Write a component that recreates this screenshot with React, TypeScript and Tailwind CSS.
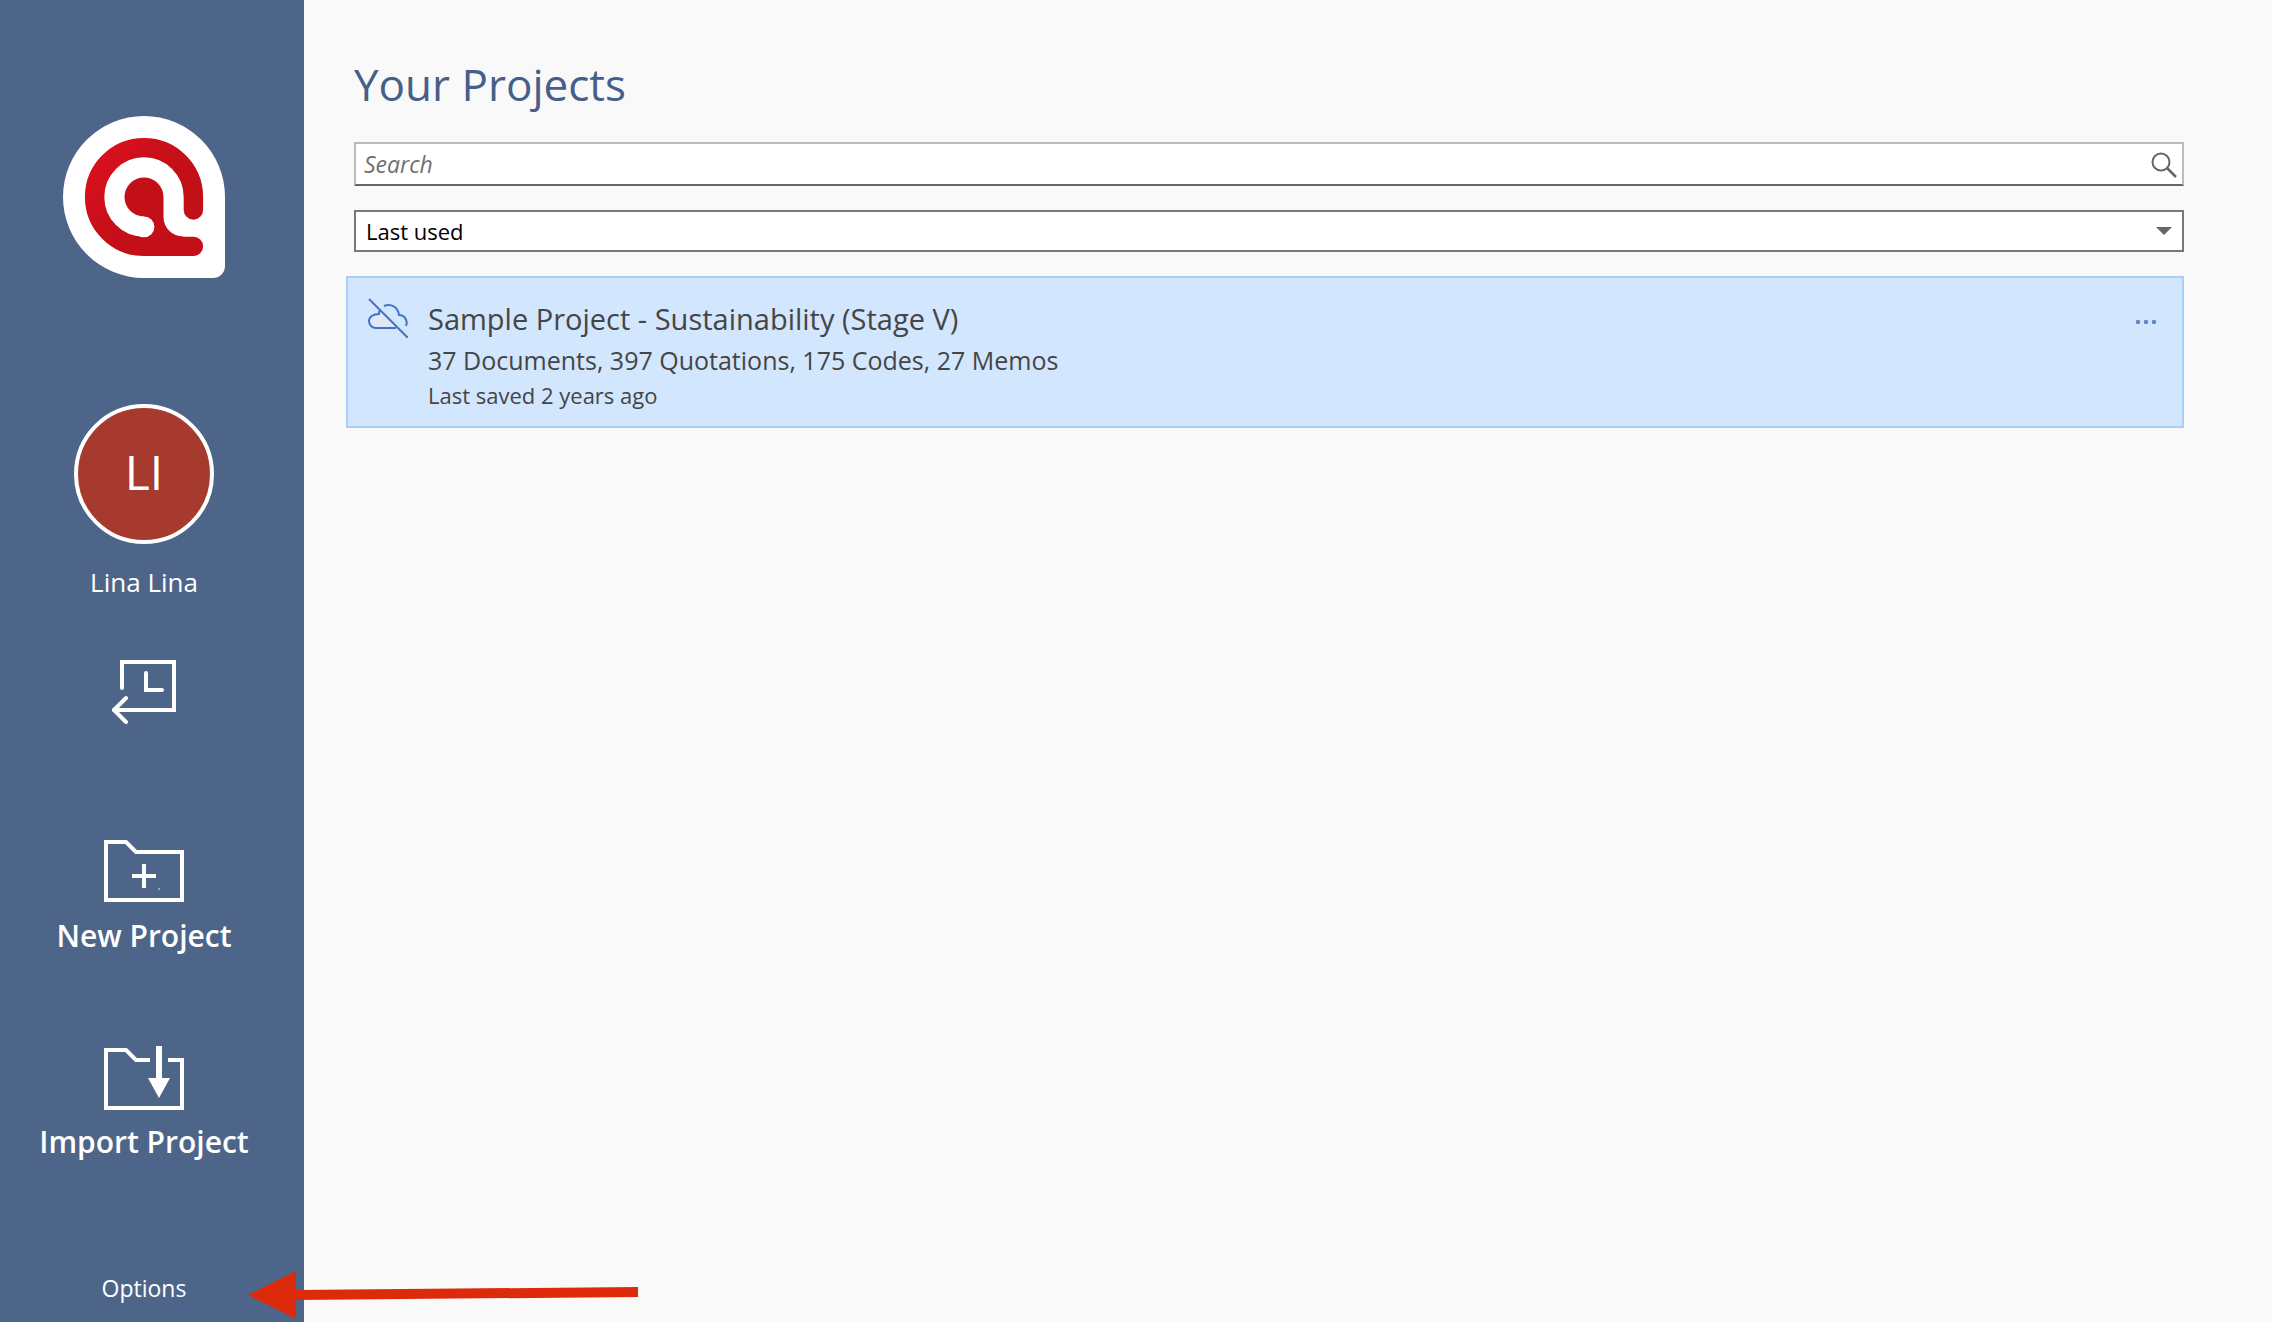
import { useState } from "react";
import type { ReactNode } from "react";

interface Project {
  name: string;
  stats: string;
  saved: string;
}

const projects: Project[] = [
  {
    name: "Sample Project - Sustainability (Stage V)",
    stats: "37 Documents, 397 Quotations, 175 Codes, 27 Memos",
    saved: "Last saved 2 years ago",
  },
];

const Logo = () => (
  <svg className="w-[162px] h-[162px]" viewBox="0 0 162 162" fill="none" aria-label="Logo">
    <defs>
      <linearGradient id="logo-red" gradientUnits="userSpaceOnUse" x1="30" y1="30" x2="100" y2="90">
        <stop offset="0" stopColor="#dd0f1e" />
        <stop offset="0.7" stopColor="#c61019" />
        <stop offset="1" stopColor="#c20f18" />
      </linearGradient>
    </defs>
    <path d="M81 0a81 81 0 0 1 81 81v69a12 12 0 0 1-12 12H81A81 81 0 0 1 81 0z" fill="#fff" />
    <path
      d="M130.4 94V81A49.4 49.4 0 1 0 81 130.4h49.4"
      stroke="url(#logo-red)"
      strokeWidth="19.4"
      strokeLinecap="round"
    />
    <path d="M81 61.5A19.5 19.5 0 0 1 100.5 81v20a19.5 19.5 0 0 0 19.5 19.5V126H81v-25.5a19.5 19.5 0 0 1 0-39z" fill="#c20f18" />
    <circle cx="81" cy="110.8" r="10.4" fill="#fff" />
  </svg>
);

const RecentIcon = () => (
  <svg className="w-16 h-16" viewBox="0 0 64 64" fill="none" stroke="#fff" strokeWidth="4">
    <path d="M10 28V2h52v48H2" strokeLinecap="round" />
    <path d="M14 38L2 50l12 12" strokeLinecap="round" strokeLinejoin="round" />
    <path d="M34 13v17h16" strokeLinecap="round" />
  </svg>
);

const NewProjectIcon = () => (
  <svg className="w-20 h-16" viewBox="0 0 80 64" fill="none" stroke="#fff" strokeWidth="4">
    <path d="M2 2h20l10 10h46v48H2z" />
    <path d="M40 24v24M28 36h24" />
    <circle cx="55" cy="49" r="1" fill="#fff" stroke="none" opacity="0.6" />
  </svg>
);

const ImportProjectIcon = () => (
  <svg className="w-20 h-16" viewBox="0 0 80 64" fill="none" stroke="#fff" strokeWidth="4">
    <path d="M46 14H32L22 4H2v58h76V14H64" />
    <path d="M55 0v34" strokeWidth="6" />
    <path d="M44 32h22L55 52z" fill="#fff" stroke="none" />
  </svg>
);

const CloudOffIcon = () => (
  <svg className="w-10 h-10 shrink-0" viewBox="0 0 40 40" fill="none" stroke="#4472c4" strokeWidth="2">
    <path d="M12 12c-1 2-1 3-1 4-6 0-10 3-10 7s3 7 7 7h22z" fill="#dfe8f6" stroke="none" />
    <path d="M12 12c-1 2-1 3-1 4-6 0-10 3-10 7s3 7 7 7h20" />
    <path d="M16 8c7-3 14 1 15 9 6 0 9 6 7 11" />
    <path d="M1 1l39 39" />
  </svg>
);

const SearchIcon = () => (
  <svg className="w-7 h-7 shrink-0" viewBox="0 0 28 28" fill="none" stroke="#666" strokeWidth="2">
    <circle cx="11" cy="12" r="8.5" />
    <path d="M17 18l9 9" strokeWidth="2.5" />
  </svg>
);

interface SidebarActionProps {
  label: string;
  icon: ReactNode;
}

const SidebarAction = ({ label, icon }: SidebarActionProps) => (
  <button className="flex flex-col items-center gap-3">
    {icon}
    <span className="text-[30px] leading-10 font-semibold whitespace-nowrap">{label}</span>
  </button>
);

const Sidebar = () => (
  <aside className="relative w-[304px] shrink-0 flex flex-col items-center bg-[#4e658a] text-white pt-[116px] pb-[14px] pr-4">
    <Logo />
    <div className="mt-[126px] w-[140px] h-[140px] rounded-full border-4 border-white bg-[#a63a2e] flex items-center justify-center pb-1 text-5xl">
      LI
    </div>
    <div className="mt-[18px] text-[26px] leading-10">Lina Lina</div>
    <button className="mt-[58px]" aria-label="Recent projects">
      <RecentIcon />
    </button>
    <div className="mt-[116px] flex flex-col items-center gap-[90px]">
      <SidebarAction label="New Project" icon={<NewProjectIcon />} />
      <SidebarAction label="Import Project" icon={<ImportProjectIcon />} />
    </div>
    <button className="mt-auto text-[23px] leading-10">Options</button>

    {/* callout arrow pointing at Options */}
    <svg className="absolute left-[248px] bottom-[2px] w-[390px] h-[50px] pointer-events-none" viewBox="0 0 390 50" fill="#dc2a0a">
      <path d="M0 25L48 1v19L390 17v10L48 30v19z" />
    </svg>
  </aside>
);

const ProjectCard = ({ project }: { project: Project }) => (
  <article className="flex items-start border-2 border-[#a9cef8] bg-[#d2e6fe] text-[#454545] pt-5 pb-4 pl-5 pr-[26px]">
    <CloudOffIcon />
    <div className="ml-5 flex-1">
      <h2 className="text-[29px] leading-[42px]">{project.name}</h2>
      <p className="text-[25px] leading-10">{project.stats}</p>
      <p className="text-[22px] leading-[30px]">{project.saved}</p>
    </div>
    <button className="mt-[22px] flex gap-1" aria-label="More actions">
      <span className="w-1 h-1 bg-[#6389cb] rounded-[1px]" />
      <span className="w-1 h-1 bg-[#6389cb] rounded-[1px]" />
      <span className="w-1 h-1 bg-[#6389cb] rounded-[1px]" />
    </button>
  </article>
);

export default function App() {
  const [query, setQuery] = useState("");
  const [sort, setSort] = useState("last-used");

  const visible = projects.filter((p) => p.name.toLowerCase().includes(query.toLowerCase()));

  return (
    <div className="min-h-screen flex bg-[#f9f9f9] font-['Open_Sans',sans-serif]">
      <Sidebar />
      <main className="flex-1 pt-[54px] pr-[88px] pl-[42px]">
        <h1 className="ml-2 text-[44px] leading-[60px] text-[#465f8a]">Your Projects</h1>

        <label className="mt-7 ml-2 h-11 flex items-center bg-white border-2 border-[#bcbcbc] border-b-[#666] pl-2 pr-1">
          <input
            type="text"
            aria-label="Search"
            placeholder="Search"
            value={query}
            onChange={(e) => setQuery(e.target.value)}
            className="flex-1 min-w-0 text-[23px] leading-8 italic outline-none placeholder:text-[#707070]"
          />
          <SearchIcon />
        </label>

        <div className="mt-6 ml-2 grid items-center">
          <select
            aria-label="Sort projects"
            value={sort}
            onChange={(e) => setSort(e.target.value)}
            className="col-start-1 row-start-1 h-[42px] w-full appearance-none bg-white border-2 border-[#777] pl-[10px] text-[22px] leading-8 text-black"
          >
            <option value="last-used">Last used</option>
            <option value="name">Name</option>
          </select>
          <svg className="col-start-1 row-start-1 justify-self-end mr-3 w-4 h-2 pointer-events-none" viewBox="0 0 16 8" fill="#666">
            <path d="M0 0h16L8 8z" />
          </svg>
        </div>

        <div className="mt-6 flex flex-col gap-2">
          {visible.map((p) => (
            <ProjectCard key={p.name} project={p} />
          ))}
        </div>
      </main>
    </div>
  );
}
